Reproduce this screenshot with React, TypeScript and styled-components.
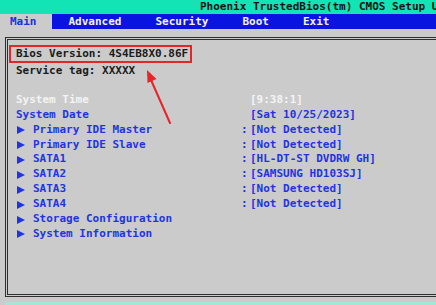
import styled, { createGlobalStyle } from "styled-components";

// ==================== Data ====================

const tabs = ["Main", "Advanced", "Security", "Boot", "Exit"];

interface SetupItem {
  label: string;
  value: string;
  submenu?: boolean;
  colon?: boolean;
  selected?: boolean;
}

const items: SetupItem[] = [
  { label: "System Time", value: "[9:38:1]", selected: true },
  { label: "System Date", value: "[Sat 10/25/2023]" },
  { label: "Primary IDE Master", value: "[Not Detected]", submenu: true, colon: true },
  { label: "Primary IDE Slave", value: "[Not Detected]", submenu: true, colon: true },
  { label: "SATA1", value: "[HL-DT-ST DVDRW GH]", submenu: true, colon: true },
  { label: "SATA2", value: "[SAMSUNG HD103SJ]", submenu: true, colon: true },
  { label: "SATA3", value: "[Not Detected]", submenu: true, colon: true },
  { label: "SATA4", value: "[Not Detected]", submenu: true, colon: true },
  { label: "Storage Configuration", value: "", submenu: true },
  { label: "System Information", value: "", submenu: true },
];

// ==================== Styles ====================

const GlobalStyle = createGlobalStyle`
  html, body {
    margin: 0;
    padding: 0;
    background: #cbcbcb;
  }
  body {
    font-family: "DejaVu Sans Mono", "Liberation Mono", monospace;
    font-weight: bold;
    font-size: 11px;
  }
`;

const Screen = styled.div`
  position: relative;
  width: 436px;
  height: 305px;
  overflow: hidden;
  display: flex;
  flex-direction: column;
  background: #cbcbcb;
`;

const TitleBar = styled.div`
  height: 14px;
  line-height: 13px;
  padding-left: 200px;
  background: #12e4b6;
  color: #111;
  white-space: nowrap;
  overflow: hidden;
`;

const TabBar = styled.div`
  height: 15px;
  display: flex;
  align-items: stretch;
  background: #0a14e0;
`;

const Tab = styled.div<{ $active?: boolean }>`
  display: flex;
  align-items: center;
  padding: ${({ $active }) => ($active ? "0 15px 0 10px" : "0 17px")};
  background: ${({ $active }) => ($active ? "#cbcbcb" : "transparent")};
  color: ${({ $active }) => ($active ? "#1a2ee0" : "#f2f2f2")};
  white-space: nowrap;
`;

const Body = styled.div`
  flex: 1;
  display: flex;
  flex-direction: column;
  padding: 8px 0 0 5px;
`;

const Panel = styled.div`
  height: 260px;
  box-sizing: border-box;
  border: 3px double #2e2e2e;
  border-right: none;
  padding: 5px 0 0 8px;
  display: flex;
  flex-direction: column;
  align-items: flex-start;
`;

const Footer = styled.div`
  margin-top: auto;
  height: 3px;
  background: #a6e4d6;
`;

const InfoLine = styled.div`
  line-height: 14px;
  color: #1b1b1b;
  white-space: nowrap;
`;

const HighlightBox = styled.div`
  margin-left: -7px;
  padding: 0 2px 0 5px;
  border: 2px solid #e3262c;
`;

const ServiceLine = styled(InfoLine)`
  margin-top: 1px;
`;

const ItemList = styled.div`
  margin-top: 14.8px;
  display: flex;
  flex-direction: column;
`;

const Row = styled.div<{ $selected?: boolean }>`
  display: grid;
  grid-template-columns: 225px 9px auto;
  line-height: 14.9px;
  color: ${({ $selected }) => ($selected ? "#f4f4f4" : "#1f34e4")};
  white-space: nowrap;
`;

const Label = styled.div`
  display: flex;
  align-items: center;
`;

const Arrow = styled.span`
  width: 0;
  height: 0;
  margin: 0 8px 0 1px;
  border-top: 4px solid transparent;
  border-bottom: 4px solid transparent;
  border-left: 8px solid #1f34e4;
`;

const Colon = styled.span``;

const Overlay = styled.svg`
  position: absolute;
  left: 0;
  top: 0;
  pointer-events: none;
`;

// ==================== Component ====================

export default function App() {
  return (
    <>
      <GlobalStyle />
      <Screen>
        <TitleBar>Phoenix TrustedBios(tm) CMOS Setup Utility</TitleBar>
        <TabBar>
          {tabs.map((tab, i) => (
            <Tab key={tab} $active={i === 0}>
              {tab}
            </Tab>
          ))}
        </TabBar>
        <Body>
          <Panel>
            <HighlightBox>
              <InfoLine>Bios Version: 4S4EB8X0.86F</InfoLine>
            </HighlightBox>
            <ServiceLine>Service tag: XXXXX</ServiceLine>
            <ItemList>
              {items.map((item) => (
                <Row key={item.label} $selected={item.selected}>
                  <Label>
                    {item.submenu && <Arrow />}
                    {item.label}
                  </Label>
                  <Colon>{item.colon ? ":" : ""}</Colon>
                  <span>{item.value}</span>
                </Row>
              ))}
            </ItemList>
          </Panel>
          <Footer />
        </Body>
        <Overlay width="436" height="305" viewBox="0 0 436 305">
          <line
            x1="170"
            y1="123"
            x2="151"
            y2="80"
            stroke="#e8232a"
            strokeWidth="2"
            strokeLinecap="round"
          />
          <polygon points="147,70 156.5,79 147.5,83" fill="#e8232a" />
        </Overlay>
      </Screen>
    </>
  );
}
